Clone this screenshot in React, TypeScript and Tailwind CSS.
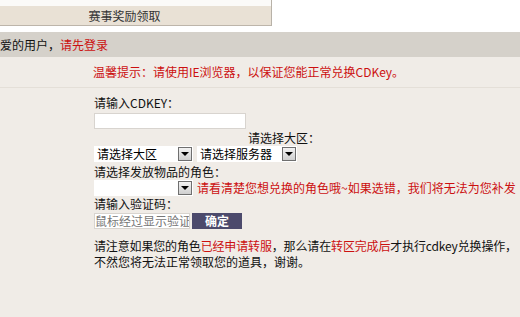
import React from "react";

function FakeSelect({ text, width }: { text: string; width: string }) {
  return (
    <div className={`flex shrink-0 items-center h-[16px] bg-white ${width}`}>
      <span className="flex-1 pl-[3px] text-[12px] leading-[16px] text-black whitespace-nowrap overflow-hidden">{text}</span>
      <span className="w-[14px] h-[14px] mr-[1px] border border-[#6f6f6f] bg-gradient-to-b from-[#f2f2f2] to-[#cfcfcf] flex items-center justify-center">
        <span className="w-0 h-0 border-l-[4px] border-r-[4px] border-t-[4px] border-l-transparent border-r-transparent border-t-black" />
      </span>
    </div>
  );
}

export default function App() {
  return (
    <div className="w-[520px] h-[317px] overflow-hidden bg-[#f0ece7] text-[12px] text-[#111] [font-family:'Noto_Sans_CJK_SC','Microsoft_YaHei',sans-serif]">
      {/* tab strip */}
      <div className="h-[32px] bg-white">
        <div className="w-[272px] h-[26px] border-r border-[#b8b2a8] bg-[#fbfaf8] pt-[6px]">
          <div className="h-[20px] bg-[#e9e1d5] border-b border-[#bdb5aa] flex items-center justify-center text-[12px] leading-[19px] text-[#333] pr-[22px]">
            赛事奖励领取
          </div>
        </div>
      </div>

      {/* login bar */}
      <div className="h-[25px] bg-[#d5d1ca] flex items-center whitespace-nowrap leading-[25px]">
        <span>爱的用户，</span>
        <span className="text-[#cc1010]">请先登录</span>
      </div>

      {/* tip row */}
      <div className="h-[31px] border-b border-[#e4dfd8] flex items-center pl-[93px] text-[#cc1010] whitespace-nowrap">
        温馨提示：请使用IE浏览器，以保证您能正常兑换CDKey。
      </div>

      {/* form */}
      <div className="pl-[94px] pt-[7px] flex flex-col whitespace-nowrap">
        <div className="h-[16px] leading-[16px]">请输入CDKEY：</div>
        <div className="h-[19px] pt-[2px]">
          <div className="w-[152px] h-[16px] bg-white border border-[#d8d4cf]" />
        </div>
        <div className="h-[16px] leading-[16px] pl-[154px]">请选择大区：</div>
        <div className="flex gap-[4px] h-[17px]">
          <FakeSelect text="请选择大区" width="w-[99px]" />
          <FakeSelect text="请选择服务器" width="w-[100px]" />
        </div>
        <div className="h-[17px] leading-[17px]">请选择发放物品的角色：</div>
        <div className="flex items-center gap-[4px] h-[16px]">
          <FakeSelect text="" width="w-[99px]" />
          <span className="text-[#cc1010] leading-[16px]">请看清楚您想兑换的角色哦~如果选错，我们将无法为您补发</span>
        </div>
        <div className="h-[16px] leading-[16px]">请输入验证码：</div>
        <div className="flex items-center gap-[2px] h-[17px]">
          <div className="w-[96px] h-[16px] bg-white border border-[#d8d4cf] text-[#777] leading-[14px] overflow-hidden">
            鼠标经过显示验证
          </div>
          <button className="w-[50px] h-[16px] bg-[#4c4a6c] text-white font-bold text-[12px] leading-[16px]">
            确定
          </button>
        </div>
        <div className="mt-[9px] leading-[16px]">
          <div className="tracking-[-0.15px]">
            请注意如果您的角色<span className="text-[#cc1010]">已经申请转服</span>，那么请在<span className="text-[#cc1010]">转区完成后</span>才执行cdkey兑换操作，
          </div>
          <div>不然您将无法正常领取您的道具，谢谢。</div>
        </div>
      </div>
    </div>
  );
}
